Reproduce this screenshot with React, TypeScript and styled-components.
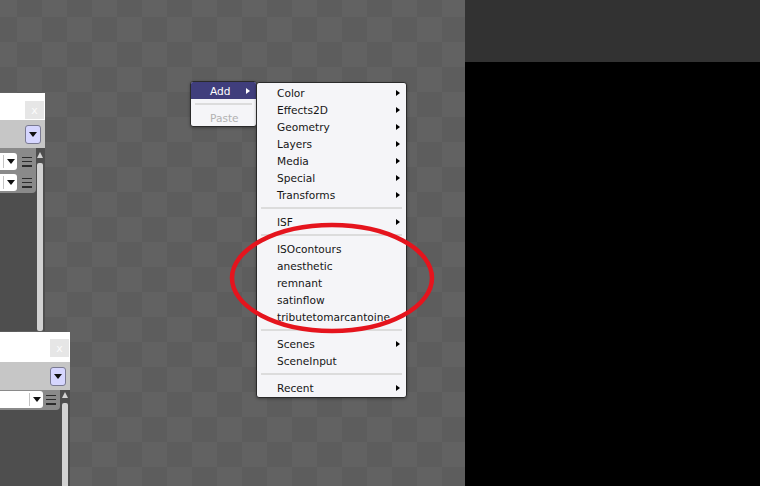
import * as React from "react";
import styled, { createGlobalStyle } from "styled-components";

const GlobalStyle = createGlobalStyle`
  html, body {
    margin: 0;
    padding: 0;
    background: #000;
  }
  body {
    font-family: "DejaVu Sans", Verdana, sans-serif;
  }
`;

const Screen = styled.div`
  display: flex;
  width: 760px;
  height: 486px;
  overflow: hidden;
`;

const Canvas = styled.div`
  position: relative;
  width: 465px;
  height: 100%;
  overflow: hidden;
  background: repeating-conic-gradient(#5d5d5d 0 25%, #626262 0 50%) 17px 17px / 50px 50px;
`;

const Preview = styled.div`
  flex: 1;
  display: flex;
  flex-direction: column;
  background: #000;
`;

const PreviewBar = styled.div`
  height: 62px;
  background: #323232;
`;

/* ---------- node panels on the canvas ---------- */

const Node = styled.div<{ $top: number; $right: number; $width: number; $height: number }>`
  position: absolute;
  top: ${p => p.$top}px;
  left: ${p => p.$right - p.$width}px;
  width: ${p => p.$width}px;
  height: ${p => p.$height}px;
  display: flex;
  flex-direction: column;
  background: #4e4e4e;
`;

const NodeHeader = styled.div<{ $height: number; $pad: number }>`
  height: ${p => p.$height}px;
  padding: ${p => p.$pad}px 1px 0 0;
  box-sizing: border-box;
  display: flex;
  justify-content: flex-end;
  align-items: flex-start;
  background: #fff;
`;

const CloseButton = styled.div`
  width: 19px;
  height: 18px;
  display: flex;
  align-items: center;
  justify-content: center;
  background: #e6e6e6;
  color: #fbfbfb;
  font-size: 11px;
`;

const NodeToolbar = styled.div<{ $pad: number }>`
  height: 28px;
  display: flex;
  justify-content: flex-end;
  align-items: center;
  padding-right: ${p => p.$pad}px;
  background: #c6c6c6;
`;

const MenuToggle = styled.div`
  width: 14px;
  height: 17px;
  display: flex;
  align-items: center;
  justify-content: center;
  border: 1px solid #7a7a92;
  border-radius: 3px;
  background: #d6d6ff;
`;

const DownTriangle = styled.div<{ $size: number }>`
  width: 0;
  height: 0;
  border-left: ${p => p.$size}px solid transparent;
  border-right: ${p => p.$size}px solid transparent;
  border-top: ${p => p.$size + 1}px solid #111;
`;

const NodeBody = styled.div`
  flex: 1;
  display: flex;
  min-height: 0;
`;

const Params = styled.div<{ $padTop: number }>`
  flex: 1;
  align-self: flex-start;
  display: flex;
  flex-direction: column;
  gap: 4px;
  padding: ${p => p.$padTop}px 4px 2px 0;
  border-bottom-right-radius: 4px;
  background: #8a8a8a;
`;

const ParamRow = styled.div<{ $gap: number }>`
  display: flex;
  align-items: center;
  gap: ${p => p.$gap}px;
`;

const Select = styled.div`
  flex: 1;
  height: 17px;
  display: flex;
  justify-content: flex-end;
  align-items: center;
  border-radius: 0 3px 3px 0;
  background: #fff;
`;

const SelectArrow = styled.div`
  width: 13px;
  height: 13px;
  display: flex;
  align-items: center;
  justify-content: center;
  border-left: 1px solid #c4c4c4;
`;

const Hamburger = styled.div`
  width: 10px;
  height: 10px;
  display: flex;
  flex-direction: column;
  justify-content: space-between;

  span {
    height: 1.5px;
    background: #2c2c2c;
  }
`;

const ScrollColumn = styled.div<{ $left: number; $right: number; $top: number }>`
  width: 6px;
  margin: ${p => p.$top}px ${p => p.$right}px 0 ${p => p.$left}px;
  display: flex;
  flex-direction: column;
  align-items: center;
  gap: 5px;
`;

const UpArrow = styled.div`
  width: 0;
  height: 0;
  border-left: 3.5px solid transparent;
  border-right: 3.5px solid transparent;
  border-bottom: 6px solid #d2d2d2;
`;

const Track = styled.div`
  flex: 1;
  width: 6px;
  border-radius: 2px;
  background: #d2d2d2;
`;

/* ---------- context menus ---------- */

const MenuBox = styled.div<{ $left: number; $top: number; $width: number; $padY: number }>`
  position: absolute;
  left: ${p => p.$left}px;
  top: ${p => p.$top}px;
  width: ${p => p.$width}px;
  box-sizing: border-box;
  padding: ${p => p.$padY}px 0;
  border: 1px solid #2a2a2a;
  border-radius: 3px;
  background: #f5f5f8;
  box-shadow: 0 1px 3px rgba(0, 0, 0, 0.35);
  font-size: 10.6px;
  color: #161616;
  overflow: hidden;
`;

const MenuItem = styled.div<{ $active?: boolean; $disabled?: boolean }>`
  height: 17px;
  display: flex;
  align-items: center;
  justify-content: space-between;
  padding: 0 6px 0 20px;
  white-space: nowrap;
  background: ${p => (p.$active ? "#403e7c" : "transparent")};
  color: ${p => (p.$active ? "#fff" : p.$disabled ? "#b2b2b2" : "#161616")};
`;

const AddItem = styled(MenuItem)`
  padding-left: 19px;
`;

const SubArrow = styled.span<{ $light?: boolean }>`
  width: 0;
  height: 0;
  border-top: 3.5px solid transparent;
  border-bottom: 3.5px solid transparent;
  border-left: 4px solid ${p => (p.$light ? "#fff" : "#000")};
`;

const Separator = styled.div`
  height: 2px;
  margin: 4px 4px;
  background: #dcdcdc;
`;

const Highlight = styled.svg`
  position: absolute;
  left: 226px;
  top: 218px;
  overflow: visible;
  pointer-events: none;
`;

type MenuEntry = { label: string; sub?: boolean } | "sep";

const addEntries: MenuEntry[] = [
  { label: "Color", sub: true },
  { label: "Effects2D", sub: true },
  { label: "Geometry", sub: true },
  { label: "Layers", sub: true },
  { label: "Media", sub: true },
  { label: "Special", sub: true },
  { label: "Transforms", sub: true },
  "sep",
  { label: "ISF", sub: true },
  "sep",
  { label: "ISOcontours" },
  { label: "anesthetic" },
  { label: "remnant" },
  { label: "satinflow" },
  { label: "tributetomarcantoine" },
  "sep",
  { label: "Scenes", sub: true },
  { label: "SceneInput" },
  "sep",
  { label: "Recent", sub: true },
];

type NodeProps = {
  top: number;
  right: number;
  width: number;
  height: number;
  headerHeight: number;
  headerPad: number;
  toolbarPad: number;
  rows: number;
  rowGap: number;
  paramsTop: number;
  scroll: { left: number; right: number; top: number };
};

const NodePanel = (p: NodeProps) => (
  <Node $top={p.top} $right={p.right} $width={p.width} $height={p.height}>
    <NodeHeader $height={p.headerHeight} $pad={p.headerPad}>
      <CloseButton>x</CloseButton>
    </NodeHeader>
    <NodeToolbar $pad={p.toolbarPad}>
      <MenuToggle>
        <DownTriangle $size={4} />
      </MenuToggle>
    </NodeToolbar>
    <NodeBody>
      <Params $padTop={p.paramsTop}>
        {Array.from({ length: p.rows }).map((_, i) => (
          <ParamRow key={i} $gap={p.rowGap}>
            <Select>
              <SelectArrow>
                <DownTriangle $size={4} />
              </SelectArrow>
            </Select>
            <Hamburger>
              <span />
              <span />
              <span />
            </Hamburger>
          </ParamRow>
        ))}
      </Params>
      <ScrollColumn $left={p.scroll.left} $right={p.scroll.right} $top={p.scroll.top}>
        <UpArrow />
        <Track />
      </ScrollColumn>
    </NodeBody>
  </Node>
);

const App: React.FC = () => {
  return (
    <Screen>
      <GlobalStyle />
      <Canvas>
        <NodePanel
          top={93}
          right={45}
          width={160}
          height={238}
          headerHeight={27}
          headerPad={8}
          toolbarPad={4}
          rows={2}
          rowGap={5}
          paramsTop={5}
          scroll={{ left: 1, right: 2, top: 4 }}
        />
        <NodePanel
          top={332}
          right={70}
          width={160}
          height={160}
          headerHeight={30}
          headerPad={7}
          toolbarPad={4}
          rows={1}
          rowGap={3}
          paramsTop={1}
          scroll={{ left: 2, right: 2, top: 2 }}
        />

        <MenuBox $left={190} $top={81} $width={67} $padY={0}>
          <AddItem $active>
            <span>Add</span>
            <SubArrow $light />
          </AddItem>
          <Separator />
          <AddItem $disabled>
            <span>Paste</span>
          </AddItem>
        </MenuBox>

        <MenuBox $left={256} $top={82} $width={151} $padY={1}>
          {addEntries.map((e, i) =>
            e === "sep" ? (
              <Separator key={i} />
            ) : (
              <MenuItem key={i}>
                <span>{e.label}</span>
                {e.sub && <SubArrow />}
              </MenuItem>
            )
          )}
        </MenuBox>

        {/* red marker ring around the ISF entries */}
        <Highlight width="212" height="120" viewBox="0 0 212 120">
          <ellipse cx="106" cy="60" rx="100" ry="53" fill="none" stroke="#e5141d" strokeWidth="4.5" />
        </Highlight>
      </Canvas>
      <Preview>
        <PreviewBar />
      </Preview>
    </Screen>
  );
};

export default App;
